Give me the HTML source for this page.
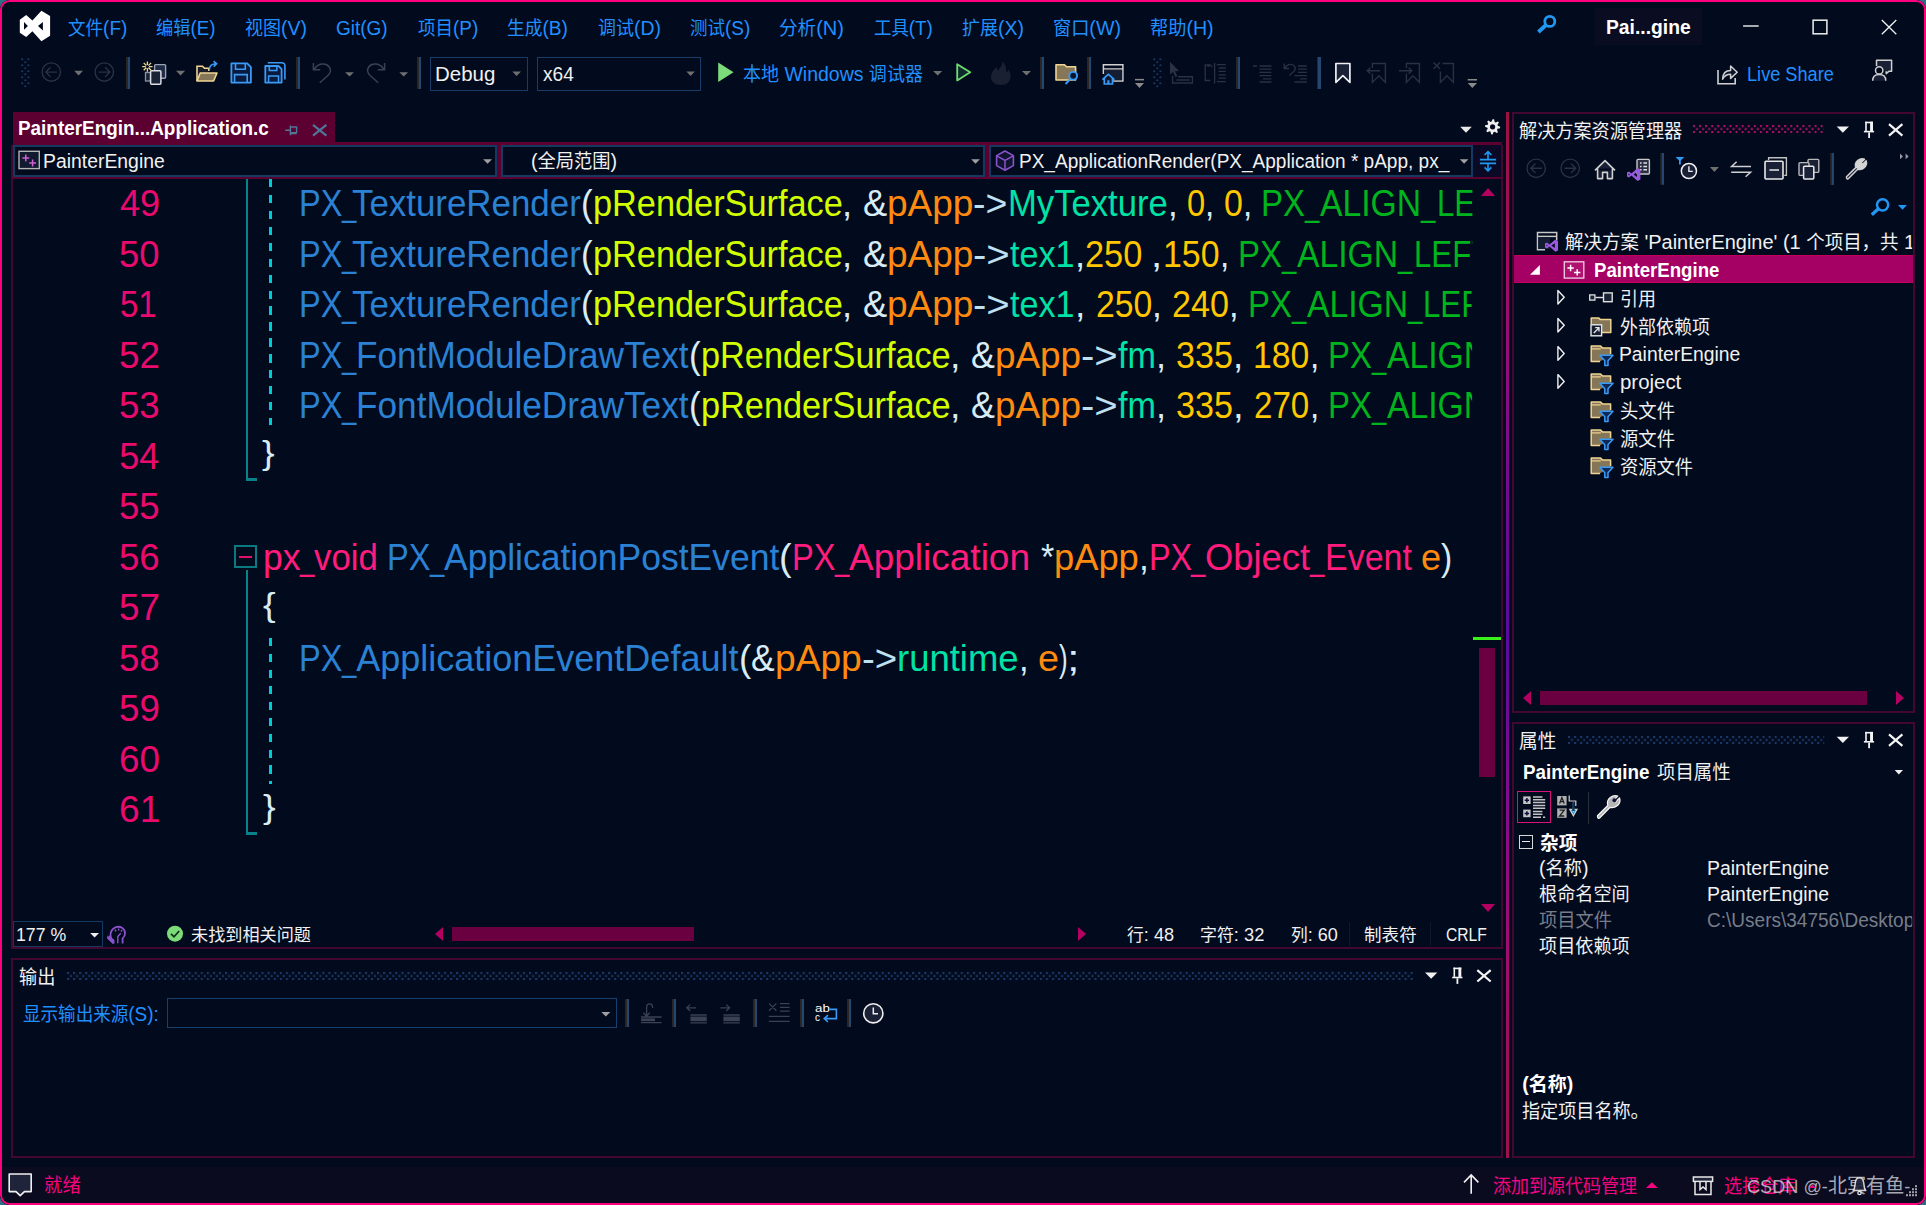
<!DOCTYPE html>
<html lang="zh"><head><meta charset="utf-8"><title>PainterEngine</title><style>
html,body{margin:0;padding:0}
body{width:1926px;height:1205px;overflow:hidden;background:#2f6f86;position:relative;font-family:"Liberation Sans","Noto Sans CJK SC",sans-serif;}
#win{position:absolute;left:0;top:0;width:1926px;height:1205px;background:#020a1e;border-radius:9.5px;overflow:hidden}
#frame{position:absolute;left:0;top:0;width:1926px;height:1205px;box-sizing:border-box;border:2.2px solid #ff007f;border-bottom-width:2.4px;border-radius:9.5px}
.a{position:absolute}
.t{position:absolute;white-space:pre;line-height:30px;height:30px;transform-origin:0 0}
.l{line-height:1px}
svg{position:absolute;overflow:visible}
</style></head><body><div id="win"><div class="a" style="left:1595.3px;top:8.1px;width:106.4px;height:37.4px;background:#0a0c21;"></div><div class="a" style="left:430.0px;top:56.7px;width:97.7px;height:34.0px;box-sizing:border-box;border:1.5px solid #1a3a68;"></div><div class="a" style="left:537.3px;top:56.7px;width:164.0px;height:34.0px;box-sizing:border-box;border:1.5px solid #1a3a68;"></div><div class="a" style="left:126.1px;top:57.0px;width:1.5px;height:32.0px;background:#2a2622;"></div><div class="a" style="left:127.6px;top:57.0px;width:2.4px;height:32.0px;background:#27466f;"></div><div class="a" style="left:296.1px;top:57.0px;width:1.5px;height:32.0px;background:#2a2622;"></div><div class="a" style="left:297.6px;top:57.0px;width:2.4px;height:32.0px;background:#27466f;"></div><div class="a" style="left:417.1px;top:57.0px;width:1.5px;height:32.0px;background:#2a2622;"></div><div class="a" style="left:418.6px;top:57.0px;width:2.4px;height:32.0px;background:#27466f;"></div><div class="a" style="left:1040.0px;top:57.0px;width:1.5px;height:32.0px;background:#2a2622;"></div><div class="a" style="left:1041.5px;top:57.0px;width:2.4px;height:32.0px;background:#27466f;"></div><div class="a" style="left:1087.1px;top:57.0px;width:1.5px;height:32.0px;background:#2a2622;"></div><div class="a" style="left:1088.6px;top:57.0px;width:2.4px;height:32.0px;background:#27466f;"></div><div class="a" style="left:1236.1px;top:57.0px;width:1.5px;height:32.0px;background:#2a2622;"></div><div class="a" style="left:1237.6px;top:57.0px;width:2.4px;height:32.0px;background:#27466f;"></div><div class="a" style="left:1316.9px;top:57.0px;width:1.5px;height:32.0px;background:#2a2622;"></div><div class="a" style="left:1318.4px;top:57.0px;width:2.4px;height:32.0px;background:#27466f;"></div><div class="a" style="left:13.0px;top:112.2px;width:321.9px;height:30.8px;background:#5c0032;"></div><div class="a" style="left:13.0px;top:142.0px;width:1489.0px;height:37.1px;background:#5c0032;"></div><div class="a" style="left:13.0px;top:145.0px;width:484.0px;height:32.0px;background:#020a1e;box-sizing:border-box;border:2px solid #143a60;"></div><div class="a" style="left:501.0px;top:145.0px;width:484.0px;height:32.0px;background:#020a1e;box-sizing:border-box;border:2px solid #143a60;"></div><div class="a" style="left:989.0px;top:145.0px;width:484.4px;height:32.0px;background:#020a1e;box-sizing:border-box;border:2px solid #143a60;"></div><div class="a" style="left:1473.4px;top:145.0px;width:27.4px;height:31.8px;background:#0a0a26;"></div><div class="a" style="left:11.0px;top:145.0px;width:2.0px;height:804.0px;background:#420830;"></div><div class="a" style="left:1501.0px;top:145.0px;width:2.0px;height:804.0px;background:#420830;"></div><div class="a" style="left:11.0px;top:947.0px;width:1492.0px;height:2.0px;background:#420830;"></div><div class="a" style="left:245.5px;top:179.0px;width:2.6px;height:301.5px;background:#0a8289;"></div><div class="a" style="left:245.5px;top:478.0px;width:11.2px;height:2.5px;background:#0a8289;"></div><div class="a" style="left:245.5px;top:570.0px;width:2.6px;height:264.5px;background:#0a8289;"></div><div class="a" style="left:245.5px;top:832.0px;width:11.2px;height:2.5px;background:#0a8289;"></div><div class="a" style="left:269.3px;top:178.8px;width:2.7px;height:246.7px;background:repeating-linear-gradient(180deg,#00ccd6 0,#00ccd6 8.3px,transparent 8.3px,transparent 15.93px);"></div><div class="a" style="left:269.3px;top:637.5px;width:2.7px;height:146.5px;background:repeating-linear-gradient(180deg,#00ccd6 0,#00ccd6 8.3px,transparent 8.3px,transparent 15.93px);"></div><div class="a" style="left:233.5px;top:544.5px;width:23.7px;height:23.8px;background:#020a1e;box-sizing:border-box;border:2.3px solid #0a7a80;"></div><div class="a" style="left:238.5px;top:555.5px;width:13.8px;height:2.8px;background:#e0106e;"></div><div class="a" style="left:1473.0px;top:636.8px;width:27.7px;height:3.0px;background:#3cf01a;"></div><div class="a" style="left:1479.0px;top:647.7px;width:16.0px;height:129.0px;background:#6a0040;"></div><svg style="left:1480.5px;top:187.5px" width="14" height="8"><path d="M0 8 L7 0 L14 8 Z" fill="#b4005f"/></svg><svg style="left:1480.5px;top:903.5px" width="14" height="8"><path d="M0 0 L7 8 L14 0 Z" fill="#b4005f"/></svg><div class="a" style="left:451.7px;top:927.3px;width:242.0px;height:13.7px;background:#6a0040;"></div><svg style="left:435px;top:927px" width="8" height="14"><path d="M8 0 L0 7 L8 14 Z" fill="#b4005f"/></svg><svg style="left:1078px;top:927px" width="8" height="14"><path d="M0 0 L8 7 L0 14 Z" fill="#b4005f"/></svg><div class="a" style="left:13.3px;top:921.0px;width:89.4px;height:25.7px;box-sizing:border-box;border:1.5px solid #143a60;"></div><div class="a" style="left:1349.0px;top:922.0px;width:1.0px;height:24.0px;background:#10182c;"></div><div class="a" style="left:1430.0px;top:922.0px;width:1.0px;height:24.0px;background:#10182c;"></div><div class="a" style="left:11.0px;top:958.0px;width:1492.0px;height:199.5px;box-sizing:border-box;border:2px solid #420830;"></div><div class="a" style="left:167.3px;top:998.3px;width:449.4px;height:30.0px;box-sizing:border-box;border:1.5px solid #16406e;"></div><div class="a" style="left:625.2px;top:999.0px;width:1.5px;height:28.0px;background:#2a2622;"></div><div class="a" style="left:626.7px;top:999.0px;width:2.3px;height:28.0px;background:#27466f;"></div><div class="a" style="left:672.2px;top:999.0px;width:1.5px;height:28.0px;background:#2a2622;"></div><div class="a" style="left:673.7px;top:999.0px;width:2.3px;height:28.0px;background:#27466f;"></div><div class="a" style="left:753.2px;top:999.0px;width:1.5px;height:28.0px;background:#2a2622;"></div><div class="a" style="left:754.7px;top:999.0px;width:2.3px;height:28.0px;background:#27466f;"></div><div class="a" style="left:800.2px;top:999.0px;width:1.5px;height:28.0px;background:#2a2622;"></div><div class="a" style="left:801.7px;top:999.0px;width:2.3px;height:28.0px;background:#27466f;"></div><div class="a" style="left:847.0px;top:999.0px;width:1.5px;height:28.0px;background:#2a2622;"></div><div class="a" style="left:848.5px;top:999.0px;width:2.3px;height:28.0px;background:#27466f;"></div><div class="a" style="left:1506.0px;top:112.0px;width:3.1px;height:1045.5px;background:linear-gradient(180deg,#9e1040 0,#a80a5c 138px,#9a0c7c 238px,#7c0a90 338px,#5a0aa0 523px,#860a92 688px,#a60a72 838px,#a0104a 1045px);"></div><div class="a" style="left:1512.0px;top:112.0px;width:403.0px;height:601.0px;box-sizing:border-box;border:2px solid #420830;"></div><div class="a" style="left:1514.0px;top:255.0px;width:399.0px;height:28.0px;background:#a50064;box-sizing:border-box;border-top:1px solid #c2005c;border-bottom:1px solid #c2005c;"></div><div class="a" style="left:1540.0px;top:691.0px;width:326.7px;height:14.0px;background:#6a0040;"></div><svg style="left:1523.3px;top:691px" width="8" height="14"><path d="M8 0 L0 7 L8 14 Z" fill="#b4005f"/></svg><svg style="left:1895.7px;top:691px" width="8" height="14"><path d="M0 0 L8 7 L0 14 Z" fill="#b4005f"/></svg><div class="a" style="left:1512.0px;top:722.0px;width:403.0px;height:435.5px;box-sizing:border-box;border:2px solid #420830;"></div><div class="a" style="left:1517.3px;top:791.0px;width:33.4px;height:32.3px;box-sizing:border-box;border:1.2px solid #d8107a;"></div><div class="a" style="left:1587.5px;top:792.0px;width:1.1px;height:32.0px;background:#2a2f3c;"></div><div class="a" style="left:1519.0px;top:834.5px;width:14.0px;height:14.0px;box-sizing:border-box;border:1.3px solid #d8d8d8;"></div><div class="a" style="left:1522.0px;top:840.8px;width:8.0px;height:1.4px;background:#e8e8e8;"></div><div class="a" style="left:0.0px;top:1166.8px;width:1926.0px;height:38.2px;background:#0a0b1f;"></div><svg style="left:1693.3px;top:125.4px" width="130.7" height="9"><defs><pattern id="d17058" width="6.08" height="6.1" patternUnits="userSpaceOnUse"><rect x="0" y="0" width="2" height="2" fill="#b8106a"/><rect x="3.04" y="3.05" width="2" height="2" fill="#b8106a"/></pattern></defs><rect width="130.7" height="8.1" fill="url(#d17058)"/></svg><svg style="left:1567.8px;top:736.1px" width="256.2" height="9"><defs><pattern id="d16414" width="6.08" height="6.1" patternUnits="userSpaceOnUse"><rect x="0" y="0" width="2" height="2" fill="#1e3c6a"/><rect x="3.04" y="3.05" width="2" height="2" fill="#1e3c6a"/></pattern></defs><rect width="256.2" height="8.1" fill="url(#d16414)"/></svg><svg style="left:66.9px;top:971.9px" width="1346.1" height="9"><defs><pattern id="d1640" width="6.08" height="6.1" patternUnits="userSpaceOnUse"><rect x="0" y="0" width="2" height="2" fill="#1e3c6a"/><rect x="3.04" y="3.05" width="2" height="2" fill="#1e3c6a"/></pattern></defs><rect width="1346.1" height="8.1" fill="url(#d1640)"/></svg><div class="t" style="left:67.6px;top:14px;font-size:19px;color:#2190ff;transform:scaleX(0.9230);">文件<span class="l" style="font-size:1.08em">(F)</span></div><div class="t" style="left:156.0px;top:14px;font-size:19px;color:#2190ff;transform:scaleX(0.9093);">编辑<span class="l" style="font-size:1.08em">(E)</span></div><div class="t" style="left:245.0px;top:14px;font-size:19px;color:#2190ff;transform:scaleX(0.9472);">视图<span class="l" style="font-size:1.08em">(V)</span></div><div class="t" style="left:336.3px;top:14px;font-size:19px;color:#2190ff;transform:scaleX(0.9227);"><span class="l" style="font-size:1.08em">Git(G)</span></div><div class="t" style="left:417.6px;top:14px;font-size:19px;color:#2190ff;transform:scaleX(0.9220);">项目<span class="l" style="font-size:1.08em">(P)</span></div><div class="t" style="left:507.0px;top:14px;font-size:19px;color:#2190ff;transform:scaleX(0.9314);">生成<span class="l" style="font-size:1.08em">(B)</span></div><div class="t" style="left:597.6px;top:14px;font-size:19px;color:#2190ff;transform:scaleX(0.9462);">调试<span class="l" style="font-size:1.08em">(D)</span></div><div class="t" style="left:689.6px;top:14px;font-size:19px;color:#2190ff;transform:scaleX(0.9220);">测试<span class="l" style="font-size:1.08em">(S)</span></div><div class="t" style="left:779.0px;top:14px;font-size:19px;color:#2190ff;transform:scaleX(0.9772);">分析<span class="l" style="font-size:1.08em">(N)</span></div><div class="t" style="left:873.6px;top:14px;font-size:19px;color:#2190ff;transform:scaleX(0.9166);">工具<span class="l" style="font-size:1.08em">(T)</span></div><div class="t" style="left:962.0px;top:14px;font-size:19px;color:#2190ff;transform:scaleX(0.9472);">扩展<span class="l" style="font-size:1.08em">(X)</span></div><div class="t" style="left:1053.0px;top:14px;font-size:19px;color:#2190ff;transform:scaleX(0.9563);">窗口<span class="l" style="font-size:1.08em">(W)</span></div><div class="t" style="left:1150.3px;top:14px;font-size:19px;color:#2190ff;transform:scaleX(0.9571);">帮助<span class="l" style="font-size:1.08em">(H)</span></div><div class="t" style="left:1606.0px;top:13px;font-size:19px;color:#ffffff;font-weight:700;transform:scaleX(0.9855);"><span class="l" style="font-size:1.03em">Pai...gine</span></div><div class="t" style="left:435.0px;top:60px;font-size:19px;color:#f1f1f1;transform:scaleX(0.9972);"><span class="l" style="font-size:1.08em">Debug</span></div><div class="t" style="left:543.1px;top:60px;font-size:19px;color:#f1f1f1;transform:scaleX(0.9303);"><span class="l" style="font-size:1.08em">x64</span></div><div class="t" style="left:743.2px;top:60px;font-size:19px;color:#2190ff;transform:scaleX(0.9488);">本地<span class="l" style="font-size:1.08em"> Windows </span>调试器</div><div class="t" style="left:1747.2px;top:60px;font-size:19px;color:#2190ff;transform:scaleX(0.8848);"><span class="l" style="font-size:1.08em">Live Share</span></div><div class="t" style="left:18.0px;top:114px;font-size:19px;color:#ffffff;font-weight:700;transform:scaleX(0.9655);"><span class="l" style="font-size:1.03em">PainterEngin...Application.c</span></div><div class="t" style="left:43.1px;top:147px;font-size:19px;color:#f1f1f1;transform:scaleX(0.9446);"><span class="l" style="font-size:1.08em">PainterEngine</span></div><div class="t" style="left:530.8px;top:147px;font-size:19px;color:#f1f1f1;transform:scaleX(0.9603);"><span class="l" style="font-size:1.08em">(</span>全局范围<span class="l" style="font-size:1.08em">)</span></div><div class="t" style="left:1019.2px;top:147px;font-size:19px;color:#f1f1f1;transform:scaleX(0.9269);"><span class="l" style="font-size:1.08em">PX_ApplicationRender(PX_Application * pApp, px_</span></div><div class="t" style="left:1519.3px;top:117px;font-size:19px;color:#f1f1f1;transform:scaleX(0.9540);">解决方案资源管理器</div><div class="t" style="left:1565.4px;top:228px;font-size:19px;color:#f1f1f1;transform:scaleX(0.9722);clip-path:inset(-20px 34.7px -20px -5px);">解决方案<span class="l" style="font-size:1.08em"> &#x27;PainterEngine&#x27; (1 </span>个项目，共<span class="l" style="font-size:1.08em"> 1 </span>个<span class="l" style="font-size:1.08em">)</span></div><div class="t" style="left:1593.6px;top:256px;font-size:19px;color:#ffffff;font-weight:700;transform:scaleX(0.9540);"><span class="l" style="font-size:1.03em">PainterEngine</span></div><div class="t" style="left:1620.0px;top:285px;font-size:19px;color:#f1f1f1;transform:scaleX(0.9453);">引用</div><div class="t" style="left:1620.0px;top:313px;font-size:19px;color:#f1f1f1;transform:scaleX(0.9487);">外部依赖项</div><div class="t" style="left:1619.3px;top:340px;font-size:19px;color:#f1f1f1;transform:scaleX(0.9407);"><span class="l" style="font-size:1.08em">PainterEngine</span></div><div class="t" style="left:1619.6px;top:368px;font-size:19px;color:#f1f1f1;transform:scaleX(0.9949);"><span class="l" style="font-size:1.08em">project</span></div><div class="t" style="left:1619.6px;top:397px;font-size:19px;color:#f1f1f1;transform:scaleX(0.9640);">头文件</div><div class="t" style="left:1619.6px;top:425px;font-size:19px;color:#f1f1f1;transform:scaleX(0.9640);">源文件</div><div class="t" style="left:1619.6px;top:453px;font-size:19px;color:#f1f1f1;transform:scaleX(0.9625);">资源文件</div><div class="t" style="left:1519.4px;top:727px;font-size:19px;color:#f1f1f1;transform:scaleX(0.9809);">属性</div><div class="t" style="left:1522.5px;top:758px;font-size:19px;color:#ffffff;font-weight:700;transform:scaleX(0.9618);"><span class="l" style="font-size:1.03em">PainterEngine</span></div><div class="t" style="left:1656.5px;top:758px;font-size:19px;color:#f1f1f1;transform:scaleX(0.9692);">项目属性</div><div class="t" style="left:1539.7px;top:829px;font-size:19px;color:#ffffff;font-weight:700;transform:scaleX(0.9809);">杂项</div><div class="t" style="left:1538.5px;top:854px;font-size:19px;color:#f1f1f1;transform:scaleX(0.9561);"><span class="l" style="font-size:1.08em">(</span>名称<span class="l" style="font-size:1.08em">)</span></div><div class="t" style="left:1706.7px;top:854px;font-size:19px;color:#f1f1f1;transform:scaleX(0.9478);"><span class="l" style="font-size:1.08em">PainterEngine</span></div><div class="t" style="left:1539.0px;top:880px;font-size:19px;color:#f1f1f1;transform:scaleX(0.9551);">根命名空间</div><div class="t" style="left:1706.7px;top:880px;font-size:19px;color:#f1f1f1;transform:scaleX(0.9478);"><span class="l" style="font-size:1.08em">PainterEngine</span></div><div class="t" style="left:1539.0px;top:906px;font-size:19px;color:#787d88;transform:scaleX(0.9611);">项目文件</div><div class="t" style="left:1707.3px;top:906px;font-size:19px;color:#787d88;transform:scaleX(0.9272);clip-path:inset(-20px 86.6px -20px -5px);"><span class="l" style="font-size:1.08em">C:\Users\34756\Desktop\PainterE</span></div><div class="t" style="left:1539.0px;top:932px;font-size:19px;color:#f1f1f1;transform:scaleX(0.9551);">项目依赖项</div><div class="t" style="left:1522.3px;top:1070px;font-size:19px;color:#ffffff;font-weight:700;"><span class="l" style="font-size:1.03em">(</span>名称<span class="l" style="font-size:1.03em">)</span></div><div class="t" style="left:1521.6px;top:1097px;font-size:19px;color:#f1f1f1;transform:scaleX(0.9538);">指定项目名称</div><div class="t" style="left:1630.4px;top:1097px;font-size:19px;color:#f1f1f1;">。</div><div class="t" style="left:16.3px;top:921px;font-size:17px;color:#f1f1f1;transform:scaleX(0.9638);"><span class="l" style="font-size:1.08em">177 %</span></div><div class="t" style="left:191.4px;top:921px;font-size:17px;color:#f1f1f1;transform:scaleX(1.0082);">未找到相关问题</div><div class="t" style="left:1127.3px;top:921px;font-size:17px;color:#f1f1f1;transform:scaleX(0.9903);">行<span class="l" style="font-size:1.08em">: 48</span></div><div class="t" style="left:1200.3px;top:921px;font-size:17px;color:#f1f1f1;transform:scaleX(0.9949);">字符<span class="l" style="font-size:1.08em">: 32</span></div><div class="t" style="left:1290.6px;top:921px;font-size:17px;color:#f1f1f1;transform:scaleX(0.9821);">列<span class="l" style="font-size:1.08em">: 60</span></div><div class="t" style="left:1364.3px;top:921px;font-size:17px;color:#f1f1f1;transform:scaleX(1.0334);">制表符</div><div class="t" style="left:1445.5px;top:921px;font-size:17px;color:#f1f1f1;transform:scaleX(0.8512);"><span class="l" style="font-size:1.08em">CRLF</span></div><div class="t" style="left:18.6px;top:963px;font-size:19px;color:#f1f1f1;transform:scaleX(0.9563);">输出</div><div class="t" style="left:22.6px;top:1000px;font-size:19px;color:#2190ff;transform:scaleX(0.9235);">显示输出来源<span class="l" style="font-size:1.08em">(S):</span></div><div class="t" style="left:43.7px;top:1171px;font-size:19px;color:#f5037f;transform:scaleX(0.9672);">就绪</div><div class="t" style="left:1493.3px;top:1172px;font-size:19px;color:#f5037f;transform:scaleX(0.9482);">添加到源代码管理</div><div class="t" style="left:1724.0px;top:1172px;font-size:19px;color:#f5037f;transform:scaleX(0.9517);">选择仓库</div><div class="t" style="left:1747.4px;top:1171px;font-size:20px;color:rgba(212,212,222,0.8);transform:scaleX(0.9548);"><span class="l" style="font-size:0.95em">CSDN @-</span>北冥有鱼<span class="l" style="font-size:0.95em">-</span></div><div class="t" style="left:814.7px;top:994px;font-size:10px;color:#ffffff;transform:scaleX(1.3326);">ab</div><div class="t" style="left:814.9px;top:1003px;font-size:10px;color:#ffffff;">c</div><div class="t" style="left:299.4px;top:189px;font-size:36px;color:#2b82d4;transform:scaleX(0.9035);">PX</div><div class="t" style="left:342.4px;top:189px;font-size:36px;color:#2b82d4;transform:scaleX(0.7150);">_</div><div class="t" style="left:352.3px;top:189px;font-size:36px;color:#2b82d4;transform:scaleX(0.9688);">TextureRender</div><div class="t" style="left:581.1px;top:189px;font-size:36px;color:#d8ecf6;transform:scaleX(0.9677);">(</div><div class="t" style="left:592.8px;top:189px;font-size:36px;color:#d2ff00;transform:scaleX(0.9528);">pRenderSurface</div><div class="t" style="left:842.4px;top:189px;font-size:36px;color:#d8ecf6;transform:scaleX(1.0126);">, </div><div class="t" style="left:862.7px;top:189px;font-size:36px;color:#d8ecf6;transform:scaleX(1.0096);">&amp;</div><div class="t" style="left:886.9px;top:189px;font-size:36px;color:#ff8a10;transform:scaleX(1.0279);">pApp</div><div class="t" style="left:973.3px;top:189px;font-size:36px;color:#bfe0f0;transform:scaleX(1.0403);">-&gt;</div><div class="t" style="left:1007.9px;top:189px;font-size:36px;color:#00e2a6;transform:scaleX(0.9619);">MyTexture</div><div class="t" style="left:1167.6px;top:189px;font-size:36px;color:#d8ecf6;transform:scaleX(0.9706);">, </div><div class="t" style="left:1187.0px;top:189px;font-size:36px;color:#ffc700;transform:scaleX(0.9072);">0</div><div class="t" style="left:1205.3px;top:189px;font-size:36px;color:#d8ecf6;transform:scaleX(0.9257);">, </div><div class="t" style="left:1223.7px;top:189px;font-size:36px;color:#ffc700;transform:scaleX(0.9421);">0</div><div class="t" style="left:1242.7px;top:189px;font-size:36px;color:#d8ecf6;transform:scaleX(0.9233);">, </div><div class="t" style="left:1261.2px;top:189px;font-size:36px;color:#00b41e;transform:scaleX(0.9139);">PX</div><div class="t" style="left:1304.7px;top:189px;font-size:36px;color:#00b41e;transform:scaleX(0.7150);">_</div><div class="t" style="left:1319.8px;top:189px;font-size:36px;color:#00b41e;transform:scaleX(0.9368);">ALIGN</div><div class="t" style="left:1420.9px;top:189px;font-size:36px;color:#00b41e;transform:scaleX(0.7150);">_</div><div class="t" style="left:1436.6px;top:189px;font-size:36px;color:#00b41e;transform:scaleX(0.8673);clip-path:inset(-20px 120.6px -20px -5px);">LEFTTOP</div><div class="t" style="left:299.4px;top:240px;font-size:36px;color:#2b82d4;transform:scaleX(0.9035);">PX</div><div class="t" style="left:342.4px;top:240px;font-size:36px;color:#2b82d4;transform:scaleX(0.7150);">_</div><div class="t" style="left:352.3px;top:240px;font-size:36px;color:#2b82d4;transform:scaleX(0.9688);">TextureRender</div><div class="t" style="left:581.1px;top:240px;font-size:36px;color:#d8ecf6;transform:scaleX(0.9677);">(</div><div class="t" style="left:592.8px;top:240px;font-size:36px;color:#d2ff00;transform:scaleX(0.9528);">pRenderSurface</div><div class="t" style="left:842.4px;top:240px;font-size:36px;color:#d8ecf6;transform:scaleX(1.0126);">, </div><div class="t" style="left:862.7px;top:240px;font-size:36px;color:#d8ecf6;transform:scaleX(1.0096);">&amp;</div><div class="t" style="left:886.9px;top:240px;font-size:36px;color:#ff8a10;transform:scaleX(1.0279);">pApp</div><div class="t" style="left:973.2px;top:240px;font-size:36px;color:#bfe0f0;transform:scaleX(1.1133);">-&gt;</div><div class="t" style="left:1010.2px;top:240px;font-size:36px;color:#00e2a6;transform:scaleX(0.9495);">tex1</div><div class="t" style="left:1074.7px;top:240px;font-size:36px;color:#d8ecf6;transform:scaleX(1.0108);">,</div><div class="t" style="left:1085.0px;top:240px;font-size:36px;color:#ffc700;transform:scaleX(0.9543);">250 </div><div class="t" style="left:1151.4px;top:240px;font-size:36px;color:#d8ecf6;transform:scaleX(1.1175);">,</div><div class="t" style="left:1163.1px;top:240px;font-size:36px;color:#ffc700;transform:scaleX(0.9406);">150</div><div class="t" style="left:1219.7px;top:240px;font-size:36px;color:#d8ecf6;transform:scaleX(0.9283);">, </div><div class="t" style="left:1238.3px;top:240px;font-size:36px;color:#00b41e;transform:scaleX(0.9139);">PX</div><div class="t" style="left:1281.8px;top:240px;font-size:36px;color:#00b41e;transform:scaleX(0.7150);">_</div><div class="t" style="left:1296.9px;top:240px;font-size:36px;color:#00b41e;transform:scaleX(0.9368);">ALIGN</div><div class="t" style="left:1398.0px;top:240px;font-size:36px;color:#00b41e;transform:scaleX(0.7150);">_</div><div class="t" style="left:1413.7px;top:240px;font-size:36px;color:#00b41e;transform:scaleX(0.8673);clip-path:inset(-20px 94.2px -20px -5px);">LEFTTOP</div><div class="t" style="left:299.4px;top:290px;font-size:36px;color:#2b82d4;transform:scaleX(0.9035);">PX</div><div class="t" style="left:342.4px;top:290px;font-size:36px;color:#2b82d4;transform:scaleX(0.7150);">_</div><div class="t" style="left:352.3px;top:290px;font-size:36px;color:#2b82d4;transform:scaleX(0.9688);">TextureRender</div><div class="t" style="left:581.1px;top:290px;font-size:36px;color:#d8ecf6;transform:scaleX(0.9677);">(</div><div class="t" style="left:592.8px;top:290px;font-size:36px;color:#d2ff00;transform:scaleX(0.9528);">pRenderSurface</div><div class="t" style="left:842.4px;top:290px;font-size:36px;color:#d8ecf6;transform:scaleX(1.0126);">, </div><div class="t" style="left:862.7px;top:290px;font-size:36px;color:#d8ecf6;transform:scaleX(1.0096);">&amp;</div><div class="t" style="left:886.9px;top:290px;font-size:36px;color:#ff8a10;transform:scaleX(1.0279);">pApp</div><div class="t" style="left:973.2px;top:290px;font-size:36px;color:#bfe0f0;transform:scaleX(1.1133);">-&gt;</div><div class="t" style="left:1010.2px;top:290px;font-size:36px;color:#00e2a6;transform:scaleX(0.9495);">tex1</div><div class="t" style="left:1074.7px;top:290px;font-size:36px;color:#d8ecf6;transform:scaleX(1.0354);">, </div><div class="t" style="left:1095.6px;top:290px;font-size:36px;color:#ffc700;transform:scaleX(0.9367);">250</div><div class="t" style="left:1151.8px;top:290px;font-size:36px;color:#d8ecf6;transform:scaleX(0.9854);">, </div><div class="t" style="left:1171.6px;top:290px;font-size:36px;color:#ffc700;transform:scaleX(0.9484);">240</div><div class="t" style="left:1228.6px;top:290px;font-size:36px;color:#d8ecf6;transform:scaleX(0.9633);">, </div><div class="t" style="left:1248.0px;top:290px;font-size:36px;color:#00b41e;transform:scaleX(0.9139);">PX</div><div class="t" style="left:1291.5px;top:290px;font-size:36px;color:#00b41e;transform:scaleX(0.7150);">_</div><div class="t" style="left:1306.6px;top:290px;font-size:36px;color:#00b41e;transform:scaleX(0.9368);">ALIGN</div><div class="t" style="left:1407.7px;top:290px;font-size:36px;color:#00b41e;transform:scaleX(0.7150);">_</div><div class="t" style="left:1423.4px;top:290px;font-size:36px;color:#00b41e;transform:scaleX(0.8673);clip-path:inset(-20px 105.4px -20px -5px);">LEFTTOP</div><div class="t" style="left:299.4px;top:341px;font-size:36px;color:#2b82d4;transform:scaleX(0.9035);">PX</div><div class="t" style="left:342.4px;top:341px;font-size:36px;color:#2b82d4;transform:scaleX(0.7150);">_</div><div class="t" style="left:356.3px;top:341px;font-size:36px;color:#2b82d4;transform:scaleX(0.9776);">FontModuleDrawText</div><div class="t" style="left:688.8px;top:341px;font-size:36px;color:#d8ecf6;transform:scaleX(0.9677);">(</div><div class="t" style="left:700.5px;top:341px;font-size:36px;color:#d2ff00;transform:scaleX(0.9524);">pRenderSurface</div><div class="t" style="left:949.9px;top:341px;font-size:36px;color:#d8ecf6;transform:scaleX(1.0476);">, </div><div class="t" style="left:971.0px;top:341px;font-size:36px;color:#d8ecf6;transform:scaleX(0.9971);">&amp;</div><div class="t" style="left:994.9px;top:341px;font-size:36px;color:#ff8a10;transform:scaleX(1.0243);">pApp</div><div class="t" style="left:1080.9px;top:341px;font-size:36px;color:#bfe0f0;transform:scaleX(1.1113);">-&gt;</div><div class="t" style="left:1117.8px;top:341px;font-size:36px;color:#00e2a6;transform:scaleX(0.9494);">fm</div><div class="t" style="left:1155.7px;top:341px;font-size:36px;color:#d8ecf6;transform:scaleX(1.0074);">, </div><div class="t" style="left:1176.0px;top:341px;font-size:36px;color:#ffc700;transform:scaleX(0.9460);">335</div><div class="t" style="left:1232.7px;top:341px;font-size:36px;color:#d8ecf6;transform:scaleX(1.0238);">, </div><div class="t" style="left:1253.4px;top:341px;font-size:36px;color:#ffc700;transform:scaleX(0.9356);">180</div><div class="t" style="left:1309.7px;top:341px;font-size:36px;color:#d8ecf6;transform:scaleX(0.9283);">, </div><div class="t" style="left:1328.3px;top:341px;font-size:36px;color:#00b41e;transform:scaleX(0.9139);">PX</div><div class="t" style="left:1371.8px;top:341px;font-size:36px;color:#00b41e;transform:scaleX(0.7150);">_</div><div class="t" style="left:1386.9px;top:341px;font-size:36px;color:#00b41e;transform:scaleX(0.9368);clip-path:inset(-20px 17.2px -20px -5px);">ALIGN</div><div class="t" style="left:299.4px;top:391px;font-size:36px;color:#2b82d4;transform:scaleX(0.9035);">PX</div><div class="t" style="left:342.4px;top:391px;font-size:36px;color:#2b82d4;transform:scaleX(0.7150);">_</div><div class="t" style="left:356.3px;top:391px;font-size:36px;color:#2b82d4;transform:scaleX(0.9776);">FontModuleDrawText</div><div class="t" style="left:688.8px;top:391px;font-size:36px;color:#d8ecf6;transform:scaleX(0.9677);">(</div><div class="t" style="left:700.5px;top:391px;font-size:36px;color:#d2ff00;transform:scaleX(0.9524);">pRenderSurface</div><div class="t" style="left:949.9px;top:391px;font-size:36px;color:#d8ecf6;transform:scaleX(1.0476);">, </div><div class="t" style="left:971.0px;top:391px;font-size:36px;color:#d8ecf6;transform:scaleX(0.9971);">&amp;</div><div class="t" style="left:994.9px;top:391px;font-size:36px;color:#ff8a10;transform:scaleX(1.0243);">pApp</div><div class="t" style="left:1080.9px;top:391px;font-size:36px;color:#bfe0f0;transform:scaleX(1.1113);">-&gt;</div><div class="t" style="left:1117.8px;top:391px;font-size:36px;color:#00e2a6;transform:scaleX(0.9494);">fm</div><div class="t" style="left:1155.7px;top:391px;font-size:36px;color:#d8ecf6;transform:scaleX(1.0074);">, </div><div class="t" style="left:1176.0px;top:391px;font-size:36px;color:#ffc700;transform:scaleX(0.9460);">335</div><div class="t" style="left:1232.5px;top:391px;font-size:36px;color:#d8ecf6;transform:scaleX(1.0704);">, </div><div class="t" style="left:1254.3px;top:391px;font-size:36px;color:#ffc700;transform:scaleX(0.9201);">270</div><div class="t" style="left:1309.7px;top:391px;font-size:36px;color:#d8ecf6;transform:scaleX(0.9283);">, </div><div class="t" style="left:1328.3px;top:391px;font-size:36px;color:#00b41e;transform:scaleX(0.9139);">PX</div><div class="t" style="left:1371.8px;top:391px;font-size:36px;color:#00b41e;transform:scaleX(0.7150);">_</div><div class="t" style="left:1386.9px;top:391px;font-size:36px;color:#00b41e;transform:scaleX(0.9368);clip-path:inset(-20px 17.2px -20px -5px);">ALIGN</div><div class="t" style="left:262.1px;top:437px;font-size:34px;color:#d8ecf6;transform:scaleX(1.1099);">}</div><div class="t" style="left:262.7px;top:543px;font-size:36px;color:#ff1c7c;transform:scaleX(0.9877);">px</div><div class="t" style="left:300.1px;top:543px;font-size:36px;color:#ff1c7c;transform:scaleX(0.7150);">_</div><div class="t" style="left:313.6px;top:543px;font-size:36px;color:#ff1c7c;transform:scaleX(0.9661);">void </div><div class="t" style="left:387.3px;top:543px;font-size:36px;color:#2b82d4;transform:scaleX(0.9035);">PX</div><div class="t" style="left:430.3px;top:543px;font-size:36px;color:#2b82d4;transform:scaleX(0.7150);">_</div><div class="t" style="left:444.1px;top:543px;font-size:36px;color:#2b82d4;transform:scaleX(0.9857);">ApplicationPostEvent</div><div class="t" style="left:779.4px;top:543px;font-size:36px;color:#d8ecf6;transform:scaleX(1.0483);">(</div><div class="t" style="left:792.3px;top:543px;font-size:36px;color:#ff1c7c;transform:scaleX(0.9035);">PX</div><div class="t" style="left:835.3px;top:543px;font-size:36px;color:#ff1c7c;transform:scaleX(0.7150);">_</div><div class="t" style="left:849.1px;top:543px;font-size:36px;color:#ff1c7c;transform:scaleX(1.0278);">Application </div><div class="t" style="left:1040.5px;top:543px;font-size:36px;color:#d8ecf6;transform:scaleX(0.9461);">*</div><div class="t" style="left:1053.7px;top:543px;font-size:36px;color:#ff8a10;transform:scaleX(1.0084);">pApp</div><div class="t" style="left:1138.5px;top:543px;font-size:36px;color:#d8ecf6;transform:scaleX(0.9866);">,</div><div class="t" style="left:1148.7px;top:543px;font-size:36px;color:#ff1c7c;transform:scaleX(0.8952);">PX</div><div class="t" style="left:1191.2px;top:543px;font-size:36px;color:#ff1c7c;transform:scaleX(0.7150);">_</div><div class="t" style="left:1204.6px;top:543px;font-size:36px;color:#ff1c7c;transform:scaleX(1.0106);">Object</div><div class="t" style="left:1309.6px;top:543px;font-size:36px;color:#ff1c7c;transform:scaleX(0.7150);">_</div><div class="t" style="left:1324.7px;top:543px;font-size:36px;color:#ff1c7c;transform:scaleX(0.9448);">Event </div><div class="t" style="left:1421.0px;top:543px;font-size:36px;color:#ff8a10;transform:scaleX(1.0043);">e</div><div class="t" style="left:1441.1px;top:543px;font-size:36px;color:#d8ecf6;transform:scaleX(0.9342);">)</div><div class="t" style="left:262.7px;top:589px;font-size:34px;color:#d8ecf6;transform:scaleX(1.1081);">{</div><div class="t" style="left:299.4px;top:644px;font-size:36px;color:#2b82d4;transform:scaleX(0.9035);">PX</div><div class="t" style="left:342.4px;top:644px;font-size:36px;color:#2b82d4;transform:scaleX(0.7150);">_</div><div class="t" style="left:356.2px;top:644px;font-size:36px;color:#2b82d4;">ApplicationEventDefault</div><div class="t" style="left:739.1px;top:644px;font-size:36px;color:#d8ecf6;transform:scaleX(1.0139);">(</div><div class="t" style="left:751.4px;top:644px;font-size:36px;color:#d8ecf6;transform:scaleX(0.9846);">&amp;</div><div class="t" style="left:774.9px;top:644px;font-size:36px;color:#ff8a10;transform:scaleX(1.0314);">pApp</div><div class="t" style="left:861.6px;top:644px;font-size:36px;color:#bfe0f0;transform:scaleX(1.0664);">-&gt;</div><div class="t" style="left:896.9px;top:644px;font-size:36px;color:#00e2a6;transform:scaleX(1.0126);">runtime</div><div class="t" style="left:1018.6px;top:644px;font-size:36px;color:#d8ecf6;transform:scaleX(0.9645);">, </div><div class="t" style="left:1037.7px;top:644px;font-size:36px;color:#ff8a10;transform:scaleX(1.0493);">e</div><div class="t" style="left:1058.8px;top:644px;font-size:36px;color:#d8ecf6;transform:scaleX(0.7230);">)</div><div class="t" style="left:1066.7px;top:644px;font-size:36px;color:#d8ecf6;transform:scaleX(1.2515);">;</div><div class="t" style="left:262.7px;top:791px;font-size:34px;color:#d8ecf6;transform:scaleX(1.1099);">}</div><div class="t" style="left:119.9px;top:189px;font-size:36px;color:#ea0a6e;transform:scaleX(1.0022);">49</div><div class="t" style="left:119.2px;top:240px;font-size:36px;color:#ea0a6e;transform:scaleX(1.0108);">50</div><div class="t" style="left:120.4px;top:290px;font-size:36px;color:#ea0a6e;transform:scaleX(0.9173);">51</div><div class="t" style="left:119.2px;top:341px;font-size:36px;color:#ea0a6e;transform:scaleX(1.0219);">52</div><div class="t" style="left:119.2px;top:391px;font-size:36px;color:#ea0a6e;transform:scaleX(1.0156);">53</div><div class="t" style="left:119.3px;top:442px;font-size:36px;color:#ea0a6e;">54</div><div class="t" style="left:119.2px;top:492px;font-size:36px;color:#ea0a6e;transform:scaleX(1.0136);">55</div><div class="t" style="left:119.2px;top:543px;font-size:36px;color:#ea0a6e;transform:scaleX(1.0156);">56</div><div class="t" style="left:119.2px;top:593px;font-size:36px;color:#ea0a6e;transform:scaleX(1.0219);">57</div><div class="t" style="left:119.2px;top:644px;font-size:36px;color:#ea0a6e;transform:scaleX(1.0151);">58</div><div class="t" style="left:119.2px;top:694px;font-size:36px;color:#ea0a6e;transform:scaleX(1.0190);">59</div><div class="t" style="left:118.8px;top:745px;font-size:36px;color:#ea0a6e;transform:scaleX(1.0214);">60</div><div class="t" style="left:118.8px;top:795px;font-size:36px;color:#ea0a6e;transform:scaleX(1.0312);">61</div><svg style="left:0;top:0" width="1926" height="1205" viewBox="0 0 1926 1205"><path d="M41.4 10.8 L50.1 16 L50.1 35.8 L41.4 41.2 L32.4 31.3 L26.2 37.1 L19.8 32.8 L19.8 19.75 L26.2 15.1 L32.4 20.5 Z M24 22 L27.9 25.9 L24 29.8 Z M42.9 22 L38 25.9 L42.9 30.4 Z" fill="#ffffff" fill-rule="evenodd"/><circle cx="1549.8" cy="21.4" r="5.0" fill="none" stroke="#2196f3" stroke-width="2.8"/><path d="M1545.8 25.2 L1538.4 32" fill="none" stroke="#2196f3" stroke-width="3.9" /><path d="M1743.1 26 H1758.7" fill="none" stroke="#f0f0f0" stroke-width="1.4" /><rect x="1813.1" y="20.2" width="13.8" height="13.6" fill="none" stroke="#f0f0f0" stroke-width="1.5"/><path d="M1881.8 20 L1896.3 34.3 M1896.3 20 L1881.8 34.3" fill="none" stroke="#f0f0f0" stroke-width="1.3" /><rect x="21.2" y="58.5" width="2.0" height="1.6" fill="#1c3a66"/><rect x="27.4" y="58.5" width="2.0" height="1.6" fill="#1c3a66"/><rect x="24.3" y="61.5" width="2.0" height="1.6" fill="#1c3a66"/><rect x="21.2" y="64.5" width="2.0" height="1.6" fill="#1c3a66"/><rect x="27.4" y="64.5" width="2.0" height="1.6" fill="#1c3a66"/><rect x="24.3" y="67.5" width="2.0" height="1.6" fill="#1c3a66"/><rect x="21.2" y="70.5" width="2.0" height="1.6" fill="#1c3a66"/><rect x="27.4" y="70.5" width="2.0" height="1.6" fill="#1c3a66"/><rect x="24.3" y="73.5" width="2.0" height="1.6" fill="#1c3a66"/><rect x="21.2" y="76.5" width="2.0" height="1.6" fill="#1c3a66"/><rect x="27.4" y="76.5" width="2.0" height="1.6" fill="#1c3a66"/><rect x="24.3" y="79.5" width="2.0" height="1.6" fill="#1c3a66"/><rect x="21.2" y="82.5" width="2.0" height="1.6" fill="#1c3a66"/><rect x="27.4" y="82.5" width="2.0" height="1.6" fill="#1c3a66"/><rect x="24.3" y="85.5" width="2.0" height="1.6" fill="#1c3a66"/><circle cx="51.3" cy="72.1" r="9.2" fill="none" stroke="#2a3142" stroke-width="1.4"/><path d="M57 72.1 H46 M50.5 67.3 L45.8 72.1 L50.5 76.9" fill="none" stroke="#2a3142" stroke-width="1.4" /><path d="M74.2 70.8 L83.0 70.8 L78.6 75.4 Z" fill="#6f6f6f" /><circle cx="104.3" cy="72.1" r="9.2" fill="none" stroke="#2a3142" stroke-width="1.4"/><path d="M98.6 72.1 H109.6 M105.1 67.3 L109.8 72.1 L105.1 76.9" fill="none" stroke="#2a3142" stroke-width="1.4" /><rect x="145.5" y="72.5" width="5.0" height="8.5" fill="#1a2238" stroke="#8a92a6" stroke-width="1.3"/><rect x="154.6" y="64.6" width="11.0" height="13.6" fill="#1f2a44" stroke="#9aa2b6" stroke-width="1.4" rx="1"/><rect x="150.6" y="70.8" width="10.3" height="13.5" fill="#1a2238" stroke="#dcdce4" stroke-width="1.5" rx="1"/><path d="M147.4 61.4 V71.8 M142.2 66.6 H152.6 M143.7 62.9 L151.1 70.3 M151.1 62.9 L143.7 70.3" fill="none" stroke="#f0d88a" stroke-width="1.3" /><circle cx="147.4" cy="66.6" r="1.6" fill="#020a1e"/><path d="M176.0 70.8 L185.1 70.8 L180.6 75.4 Z" fill="#6f6f6f" /><path d="M197 81 V66.2 H202.5 L204.5 68.2 H208.8 V71" fill="#1a1c28" stroke="#f0d492" stroke-width="1.6" /><path d="M197 81 L200.2 73 H217 L213.6 81 Z" fill="#857658" stroke="#f0d492" stroke-width="1.6" stroke-linejoin="round"/><path d="M209.5 69.5 C209.5 65.5 212 63.8 216.3 63.8 M213.6 61.2 L216.6 63.8 L213.6 66.6" fill="none" stroke="#3a9af5" stroke-width="1.6" /><path d="M231.4 63.4 H247.2 L250.9 67.1 V82.6 H231.4 Z" fill="#0a1a3c" stroke="#3a9af5" stroke-width="1.8" stroke-linejoin="round"/><path d="M235.5 63.4 V69.3 H245.3 V63.4 M234.6 82.6 V74.6 H247.2 V82.6" fill="none" stroke="#3a9af5" stroke-width="1.6" /><path d="M267.8 62.8 H281.5 C283.6 62.8 284.9 64 284.9 66 V79.6" fill="none" stroke="#3a9af5" stroke-width="1.6" /><path d="M265.3 66 H278.5 L281.6 69.1 V82.6 H265.3 Z" fill="#0a1a3c" stroke="#3a9af5" stroke-width="1.8" stroke-linejoin="round"/><path d="M269.3 66 V70.6 H276.8 V66 M268.6 82.6 V76 H278.5 V82.6" fill="none" stroke="#3a9af5" stroke-width="1.5" /><path d="M313.4 63 V69.7 H320.3 M314.3 69.3 C318 63 326 62.5 329.3 67 C331.5 70.2 330 73.6 327.6 75.8 L319.8 82.8" fill="none" stroke="#3a4152" stroke-width="1.5" /><path d="M345.1 72.2 L353.9 72.2 L349.5 76.6 Z" fill="#6f6f6f" /><path d="M384.6 63 V69.7 H377.7 M383.7 69.3 C380 63 372 62.5 368.7 67 C366.5 70.2 368 73.6 370.4 75.8 L378.2 82.8" fill="none" stroke="#3a4152" stroke-width="1.5" /><path d="M399.3 72.2 L408.1 72.2 L403.7 76.6 Z" fill="#6f6f6f" /><path d="M512.3 71.5 L521.0 71.5 L516.6 76.0 Z" fill="#6f6f6f" /><path d="M686.3 71.5 L694.9 71.5 L690.6 76.0 Z" fill="#6f6f6f" /><path d="M718.2 62.6 L733.5 72.3 L718.2 82 Z" fill="#7ddc7a" /><path d="M933.1 70.9 L942.2 70.9 L937.7 75.6 Z" fill="#6f6f6f" /><path d="M957.2 64.2 L970.2 72.3 L957.2 80.4 Z" fill="#0f2a2c" stroke="#6fdc6f" stroke-width="1.8" stroke-linejoin="round"/><path d="M1002 61.5 C1003 66 999.5 67.5 998.3 70.5 C996.5 68.5 996.8 66.8 996.8 66.8 C993 70 991 73.5 991 77.2 C991 81.8 995 84.9 1000.8 84.9 C1006.8 84.9 1010.6 81.4 1010.6 76.4 C1010.6 73.4 1009.5 71.2 1008.2 69.6 C1007.8 71.3 1007 72.2 1006 72.8 C1006.6 68 1005.6 64 1002 61.5 Z" fill="#182032" /><path d="M1022.0 70.9 L1031.0 70.9 L1026.5 75.6 Z" fill="#6f6f6f" /><path d="M1056 80 V64.8 H1064.5 L1066.5 66.8 H1075.6 V80 Z" fill="#857658" stroke="#f0d492" stroke-width="1.6" stroke-linejoin="round"/><circle cx="1073.2" cy="75.8" r="3.9" fill="#0a1630" stroke="#3a9af5" stroke-width="1.9"/><path d="M1070.4 78.8 L1065.6 84" fill="none" stroke="#3a9af5" stroke-width="1.9" /><path d="M1110 81 H1122.9 V64.8 H1103.4 V74" fill="none" stroke="#d0d0d0" stroke-width="1.5" /><path d="M1103.4 69 H1122.9" fill="none" stroke="#d0d0d0" stroke-width="1.5" /><rect x="1104.2" y="69.7" width="17.9" height="10.5" fill="#151d33"/><path d="M1102.4 79.6 L1108.4 74.4 L1114.4 79.6 M1104.3 78.6 V84 H1112.5 V78.6" fill="#0a1630" stroke="#3a9af5" stroke-width="1.7" /><rect x="1107.3" y="80.3" width="2.2" height="3.7" fill="#3a9af5"/><rect x="1135.0" y="78.9" width="9.0" height="1.5" fill="#8a8a8a"/><path d="M1135.0 83.0 L1144.0 83.0 L1139.5 88.0 Z" fill="#8a8a8a" /><rect x="1153.2" y="58.5" width="2.0" height="1.6" fill="#1c3a66"/><rect x="1159.4" y="58.5" width="2.0" height="1.6" fill="#1c3a66"/><rect x="1156.3" y="61.5" width="2.0" height="1.6" fill="#1c3a66"/><rect x="1153.2" y="64.5" width="2.0" height="1.6" fill="#1c3a66"/><rect x="1159.4" y="64.5" width="2.0" height="1.6" fill="#1c3a66"/><rect x="1156.3" y="67.5" width="2.0" height="1.6" fill="#1c3a66"/><rect x="1153.2" y="70.5" width="2.0" height="1.6" fill="#1c3a66"/><rect x="1159.4" y="70.5" width="2.0" height="1.6" fill="#1c3a66"/><rect x="1156.3" y="73.5" width="2.0" height="1.6" fill="#1c3a66"/><rect x="1153.2" y="76.5" width="2.0" height="1.6" fill="#1c3a66"/><rect x="1159.4" y="76.5" width="2.0" height="1.6" fill="#1c3a66"/><rect x="1156.3" y="79.5" width="2.0" height="1.6" fill="#1c3a66"/><rect x="1153.2" y="82.5" width="2.0" height="1.6" fill="#1c3a66"/><rect x="1159.4" y="82.5" width="2.0" height="1.6" fill="#1c3a66"/><rect x="1156.3" y="85.5" width="2.0" height="1.6" fill="#1c3a66"/><path d="M1170 61.7 L1170 74.5 L1173 72 L1175.4 77 L1177.4 76 L1175 71.2 L1179 71 Z" fill="#2a3142" /><path d="M1172.6 76 V83 H1192.4 V76.8 H1177.8 M1176.4 80 H1189.6" fill="none" stroke="#2a3142" stroke-width="1.4" /><path d="M1210 64.6 L1212.3 67 M1210 64.6 L1207.7 67 M1210 65 H1205.2 V80.5 H1210.3 M1214.6 63 V83.4 M1216.8 64.6 H1225.8 M1218.6 68 H1225.8 M1218.6 71.4 H1225.8 M1218.6 74.8 H1225.8 M1218.6 78.2 H1225.8 M1216.8 81.6 H1225.8" fill="none" stroke="#2a3142" stroke-width="1.3" /><path d="M1253 66 H1257 M1259.5 66 H1271.4 M1259.5 69.2 H1271.4 M1259.5 72.4 H1271.4 M1259.5 75.6 H1271.4 M1263 78.8 H1271.4 M1259.5 82 H1271.4" fill="none" stroke="#2a3142" stroke-width="1.3" /><path d="M1284.2 63.5 V68.5 H1289 M1285 68 C1287 63.6 1293 63.4 1294.8 66.6 C1296 69 1294.6 71 1292.6 72.6 L1289.4 75.4 M1298 66 H1306.8 M1298 69.2 H1306.8 M1298 72.4 H1306.8 M1294.5 75.6 H1306.8 M1300 78.8 H1306.8 M1294.5 82 H1306.8" fill="none" stroke="#2a3142" stroke-width="1.3" /><path d="M1335.9 63.5 H1349.9 V82.4 L1342.9 75.6 L1335.9 82.4 Z" fill="#1a2136" stroke="#f0f0f0" stroke-width="1.7" stroke-linejoin="round"/><path d="M1372.4 68 V63.5 H1385.4 V82.4 L1378.9 75.8 L1372.4 82.4 V73.4 M1380 70.7 H1367.4 M1370.4 67.7 L1367.2 70.7 L1370.4 73.7" fill="none" stroke="#2a3142" stroke-width="1.4" /><path d="M1406.4 68 V63.5 H1419.4 V82.4 L1412.9 75.8 L1406.4 82.4 V73.4 M1399 70.7 H1411.6 M1408.6 67.7 L1411.8 70.7 L1408.6 73.7" fill="none" stroke="#2a3142" stroke-width="1.4" /><path d="M1442.5 63.5 H1453.4 V82.4 L1446.9 75.8 L1440.4 82.4 V71.5 M1433.6 62.4 L1440 68.8 M1440 62.4 L1433.6 68.8" fill="none" stroke="#2a3142" stroke-width="1.4" /><rect x="1467.7" y="79.0" width="9.3" height="1.5" fill="#8a8a8a"/><path d="M1467.7 83.0 L1477.0 83.0 L1472.3 88.0 Z" fill="#8a8a8a" /><path d="M1718 70 V83.8 H1735.2 V78" fill="none" stroke="#d0d0d0" stroke-width="1.6" /><path d="M1722.6 79.2 C1722.8 73.4 1726 70.6 1730.6 70.6 V66 L1737.2 72.2 L1730.6 78.4 V74.2 C1727 74.2 1724.4 75.6 1722.6 79.2 Z" fill="#0a1226" stroke="#d0d0d0" stroke-width="1.5" stroke-linejoin="round"/><path d="M1876.5 66 V60.3 H1891.6 V71.2 H1889 L1886.2 73.6 V71.2" fill="#1a2136" stroke="#d0d0d0" stroke-width="1.5" stroke-linejoin="round"/><circle cx="1879.2" cy="70.4" r="3.7" fill="#020a1e" stroke="#d0d0d0" stroke-width="1.5"/><path d="M1872.7 80.8 C1872.7 76.6 1875.4 74.6 1879.2 74.6 C1883 74.6 1885.8 76.6 1885.8 80.8" fill="#1a2136" stroke="#d0d0d0" stroke-width="1.5" /><path d="M285.2 130.2 H290.4 M290.4 125.6 V135.2 M290.4 127 H296.6 V132.6 H290.4 M290.4 133.6 H296.6" fill="none" stroke="#4f7797" stroke-width="1.4" /><path d="M313 124.8 L326.4 135.6 M326.4 124.8 L313 135.6" fill="none" stroke="#4f7797" stroke-width="2.2" /><rect x="19.0" y="151.3" width="20.3" height="17.3" fill="#121a30" stroke="#b4b4b4" stroke-width="1.4"/><path d="M25.8 154.6 V161.4 M22.4 158 H29.2 M32.6 159.6 V166.4 M29.2 163 H36" fill="none" stroke="#d060d4" stroke-width="1.5" /><path d="M483.1 159.2 L492.0 159.2 L487.6 163.8 Z" fill="#a0a0a0" /><path d="M971.2 159.2 L979.9 159.2 L975.5 163.8 Z" fill="#a0a0a0" /><path d="M1459.8 159.2 L1468.4 159.2 L1464.1 163.8 Z" fill="#a0a0a0" /><path d="M1005 151 L1013.4 155.6 V165.6 L1005 170.2 L996.6 165.6 V155.6 Z" fill="#10142e" stroke="#8a52cc" stroke-width="1.6" stroke-linejoin="round"/><path d="M996.8 155.8 L1005 160.4 L1013.2 155.8 M1005 160.4 V170" fill="none" stroke="#8a52cc" stroke-width="1.5" /><path d="M1479.9 159.6 H1496.1 M1479.9 163.4 H1496.1 M1488 152 V159 M1484.6 155 L1488 151.6 L1491.4 155 M1488 164 V170.6 M1484.6 167.4 L1488 170.8 L1491.4 167.4" fill="none" stroke="#1e9af0" stroke-width="1.6" /><path d="M1460.2 126.8 L1471.8 126.8 L1466.0 132.7 Z" fill="#e8e8e8" /><path d="M1500.20 126.80 L1500.05 128.28 L1497.50 128.83 L1497.01 129.74 L1497.97 132.17 L1496.82 133.12 L1494.63 131.70 L1493.63 132.00 L1492.60 134.40 L1491.12 134.25 L1490.57 131.70 L1489.66 131.21 L1487.23 132.17 L1486.28 131.02 L1487.70 128.83 L1487.40 127.83 L1485.00 126.80 L1485.15 125.32 L1487.70 124.77 L1488.19 123.86 L1487.23 121.43 L1488.38 120.48 L1490.57 121.90 L1491.57 121.60 L1492.60 119.20 L1494.08 119.35 L1494.63 121.90 L1495.54 122.39 L1497.97 121.43 L1498.92 122.58 L1497.50 124.77 L1497.80 125.77 Z" fill="#eeeeee"/><circle cx="1492.6" cy="126.8" r="2.6" fill="#020a1e"/><path d="M1836.7 126.6 L1849.0 126.6 L1842.8 132.8 Z" fill="#f0f0f0" /><rect x="1865.2" y="121.7" width="1.6" height="9.3" fill="#f4f4f4"/><rect x="1865.2" y="121.7" width="7.8" height="1.6" fill="#f4f4f4"/><rect x="1870.1" y="121.7" width="2.9" height="9.3" fill="#f4f4f4"/><rect x="1863.9" y="130.8" width="10.2" height="1.6" fill="#f4f4f4"/><rect x="1868.2" y="132.4" width="1.8" height="5.6" fill="#f4f4f4"/><path d="M1889.0 124.2 L1902.4 135.6 M1902.4 124.2 L1889.0 135.6" fill="none" stroke="#f4f4f4" stroke-width="2.2" /><path d="M1836.7 736.8 L1849.0 736.8 L1842.8 743.0 Z" fill="#f0f0f0" /><rect x="1865.2" y="731.9" width="1.6" height="9.3" fill="#f4f4f4"/><rect x="1865.2" y="731.9" width="7.8" height="1.6" fill="#f4f4f4"/><rect x="1870.1" y="731.9" width="2.9" height="9.3" fill="#f4f4f4"/><rect x="1863.9" y="741.0" width="10.2" height="1.6" fill="#f4f4f4"/><rect x="1868.2" y="742.6" width="1.8" height="5.6" fill="#f4f4f4"/><path d="M1889.0 734.4 L1902.4 745.8 M1902.4 734.4 L1889.0 745.8" fill="none" stroke="#f4f4f4" stroke-width="2.2" /><path d="M1425.0 972.5 L1437.3 972.5 L1431.2 978.7 Z" fill="#f0f0f0" /><rect x="1453.5" y="967.6" width="1.6" height="9.3" fill="#f4f4f4"/><rect x="1453.5" y="967.6" width="7.8" height="1.6" fill="#f4f4f4"/><rect x="1458.4" y="967.6" width="2.9" height="9.3" fill="#f4f4f4"/><rect x="1452.2" y="976.7" width="10.2" height="1.6" fill="#f4f4f4"/><rect x="1456.5" y="978.3" width="1.8" height="5.6" fill="#f4f4f4"/><path d="M1477.3 970.1 L1490.7 981.5 M1490.7 970.1 L1477.3 981.5" fill="none" stroke="#f4f4f4" stroke-width="2.2" /><circle cx="1536.2" cy="168.3" r="9.2" fill="none" stroke="#2a3142" stroke-width="1.4"/><path d="M1542 168.3 H1531 M1535.5 163.5 L1530.8 168.3 L1535.5 173.1" fill="none" stroke="#2a3142" stroke-width="1.4" /><circle cx="1570.2" cy="168.3" r="9.2" fill="none" stroke="#2a3142" stroke-width="1.4"/><path d="M1564.5 168.3 H1575.5 M1571 163.5 L1575.7 168.3 L1571 173.1" fill="none" stroke="#2a3142" stroke-width="1.4" /><path d="M1595 170.4 L1605 160.6 L1615 170.4 M1597.6 168.6 V178.6 H1602.6 V172.4 H1607.4 V178.6 H1612.4 V168.6" fill="#1a2136" stroke="#d0d0d0" stroke-width="1.6" stroke-linejoin="round"/><rect x="1637.0" y="159.4" width="12.4" height="14.6" fill="#2a3042" stroke="#c8c8c8" stroke-width="1.4" rx="1"/><path d="M1640 163 H1641.6 M1643.4 163 H1647 M1640 166.4 H1641.6 M1643.4 166.4 H1647 M1640 169.8 H1641.6 M1643.4 169.8 H1647" fill="none" stroke="#e0e0e0" stroke-width="1.5" /><path d="M1637.6 168 L1640.4 169.6 V179.4 L1637.6 181 L1631.4 175.6 L1629 177.6 L1627 176.6 V172.4 L1629 171.4 L1631.4 173.4 Z M1637 172 L1633.6 174.5 L1637 177 Z M1628.6 173.4 L1630 174.5 L1628.6 175.6 Z" fill="#9a5ae0" fill-rule="evenodd"/><rect x="1660.3" y="153.0" width="1.5" height="31.8" fill="#2a2622"/><rect x="1661.8" y="153.0" width="2.2" height="31.8" fill="#27466f"/><path d="M1675.6 156.9 H1684.2 L1680.8 160.6 V164.4 H1679 V160.6 Z" fill="#2f9bf5" /><circle cx="1688.9" cy="171.0" r="7.6" fill="#1a2136" stroke="#eeeeee" stroke-width="1.5"/><path d="M1688.9 166.2 V171.4 H1692.8" fill="none" stroke="#eeeeee" stroke-width="1.4" /><path d="M1709.9 167.0 L1718.9 167.0 L1714.4 171.9 Z" fill="#6f6f6f" /><path d="M1751 166.4 H1731.6 L1736.6 161.8 M1731.2 172.2 H1750.6 L1745.6 176.8" fill="none" stroke="#d0d0d0" stroke-width="1.5" /><path d="M1768.6 160 V157.8 H1786.4 V175.4 H1784.2" fill="none" stroke="#c0c0c0" stroke-width="1.4" /><rect x="1765.0" y="161.2" width="18.0" height="17.8" fill="#1a2136" stroke="#e8e8e8" stroke-width="1.6" rx="1"/><path d="M1769.4 170 H1779" fill="none" stroke="#e8e8e8" stroke-width="1.5" /><rect x="1808.0" y="159.4" width="10.8" height="13.0" fill="#1a2136" stroke="#b8b8b8" stroke-width="1.4" rx="1"/><rect x="1799.0" y="162.6" width="10.0" height="12.8" fill="#1a2136" stroke="#b8b8b8" stroke-width="1.4" rx="1"/><rect x="1803.6" y="166.2" width="10.2" height="12.8" fill="#1a2136" stroke="#e8e8e8" stroke-width="1.5" rx="1"/><rect x="1830.2" y="153.0" width="1.5" height="32.0" fill="#2a2622"/><rect x="1831.7" y="153.0" width="2.2" height="32.0" fill="#27466f"/><path d="M1846.5 176.8 L1855.7 167.6 C1854.9 165.0 1855.7 162.2 1857.9 160.4 C1859.9 158.8 1862.5 158.4 1864.5 159.2 L1861.1 162.6 L1862.7 164.2 L1866.1 160.8 C1866.9 163.0 1866.3 165.6 1864.5 167.4 C1862.7 169.2 1860.1 169.8 1857.7 169.2 L1848.5 178.6 C1847.7 179.4 1846.3 179.2 1846.5 176.8 Z" fill="#1a2136" stroke="#d0d0d0" stroke-width="1.5" stroke-linejoin="round"/><path d="M1855.7 167.6 C1854.9 165.0 1855.7 162.2 1857.9 160.4 C1859.9 158.8 1862.5 158.4 1864.5 159.2 L1861.1 162.6 L1862.7 164.2 L1866.1 160.8 C1866.9 163.0 1866.3 165.6 1864.5 167.4 C1862.7 169.2 1860.1 169.8 1857.7 169.2 Z" fill="#d4d4d4" /><path d="M1900 153.6 L1903 156.4 L1900 159.2 Z M1905.6 153.6 L1908.6 156.4 L1905.6 159.2 Z" fill="#9a9aa4" /><circle cx="1882.6" cy="204.8" r="5.6" fill="none" stroke="#2196f3" stroke-width="2.5"/><path d="M1878.4 208.8 L1871.8 214.8" fill="none" stroke="#2196f3" stroke-width="3.4" /><path d="M1898.0 205.1 L1906.9 205.1 L1902.5 209.8 Z" fill="#2196f3" /><path d="M1545 249.8 H1537.5 V232.6 H1556.7 V240" fill="none" stroke="#c8c8c8" stroke-width="1.5" /><path d="M1537.5 236.4 H1556.7" fill="none" stroke="#c8c8c8" stroke-width="1.5" /><rect x="1538.3" y="237.2" width="11.7" height="11.8" fill="#151d33"/><path d="M1555.4 239.4 L1558 240.8 V250.4 L1555.4 251.8 L1549.4 246.6 L1547 248.6 L1545 247.6 V243.6 L1547 242.6 L1549.4 244.6 Z M1554.8 243.2 L1551.4 245.6 L1554.8 248 Z M1546.6 244.6 L1547.8 245.6 L1546.6 246.6 Z" fill="#9a5ae0" fill-rule="evenodd"/><path d="M1539.9 264.9 V274.8 H1530 Z" fill="#ffffff" /><rect x="1564.3" y="261.8" width="19.5" height="16.3" fill="#b0106e" stroke="#ecc4dc" stroke-width="1.4"/><path d="M1570.6 264.8 V271.2 M1567.4 268 H1573.8 M1577.2 269.2 V275.6 M1574 272.4 H1580.4" fill="none" stroke="#ffffff" stroke-width="1.5" /><path d="M1557.9 290.5 L1564.2 297.3 L1557.9 304.1 Z" fill="none" stroke="#f0f0f0" stroke-width="1.4" stroke-linejoin="round"/><path d="M1557.9 318.5 L1564.2 325.3 L1557.9 332.1 Z" fill="none" stroke="#f0f0f0" stroke-width="1.4" stroke-linejoin="round"/><path d="M1557.9 346.6 L1564.2 353.4 L1557.9 360.2 Z" fill="none" stroke="#f0f0f0" stroke-width="1.4" stroke-linejoin="round"/><path d="M1557.9 374.6 L1564.2 381.4 L1557.9 388.2 Z" fill="none" stroke="#f0f0f0" stroke-width="1.4" stroke-linejoin="round"/><rect x="1589.7" y="294.9" width="5.2" height="5.2" fill="#1a2236" stroke="#e0e0e0" stroke-width="1.3"/><path d="M1595.4 297.5 H1603" fill="none" stroke="#e0e0e0" stroke-width="1.4" /><rect x="1603.5" y="292.9" width="8.7" height="8.8" fill="#1a2236" stroke="#e0e0e0" stroke-width="1.4"/><path d="M1598 332.6 H1610.8 V319.6 H1600.4 L1598.6 317.9 H1591.2 V324" fill="#857658" stroke="#f0d492" stroke-width="1.5" stroke-linejoin="round"/><rect x="1591.0" y="324.8" width="10.6" height="11.0" fill="#151d33" stroke="#e8e8e8" stroke-width="1.4"/><path d="M1593.8 333 L1598.8 328 M1595.2 327.6 H1599 V331.4" fill="none" stroke="#e8e8e8" stroke-width="1.3" /><path d="M1600 361.5 H1591.2 V346.1 H1600.6 L1602.4 347.9 H1610.6 V354.3" fill="#857658" stroke="#f0d492" stroke-width="1.5" stroke-linejoin="round"/><path d="M1591.2 348.9 H1600.8" fill="none" stroke="#f0d492" stroke-width="1.2" /><path d="M1599.8 355.3 H1613 L1608 360.7 V365.5 H1604.8 V360.7 Z" fill="#0c2a58" stroke="#3a9af5" stroke-width="1.5" stroke-linejoin="round"/><path d="M1600 389.5 H1591.2 V374.1 H1600.6 L1602.4 375.9 H1610.6 V382.3" fill="#857658" stroke="#f0d492" stroke-width="1.5" stroke-linejoin="round"/><path d="M1591.2 376.9 H1600.8" fill="none" stroke="#f0d492" stroke-width="1.2" /><path d="M1599.8 383.3 H1613 L1608 388.7 V393.5 H1604.8 V388.7 Z" fill="#0c2a58" stroke="#3a9af5" stroke-width="1.5" stroke-linejoin="round"/><path d="M1600 417.5 H1591.2 V402.1 H1600.6 L1602.4 403.9 H1610.6 V410.3" fill="#857658" stroke="#f0d492" stroke-width="1.5" stroke-linejoin="round"/><path d="M1591.2 404.9 H1600.8" fill="none" stroke="#f0d492" stroke-width="1.2" /><path d="M1599.8 411.3 H1613 L1608 416.7 V421.5 H1604.8 V416.7 Z" fill="#0c2a58" stroke="#3a9af5" stroke-width="1.5" stroke-linejoin="round"/><path d="M1600 445.5 H1591.2 V430.1 H1600.6 L1602.4 431.9 H1610.6 V438.3" fill="#857658" stroke="#f0d492" stroke-width="1.5" stroke-linejoin="round"/><path d="M1591.2 432.9 H1600.8" fill="none" stroke="#f0d492" stroke-width="1.2" /><path d="M1599.8 439.3 H1613 L1608 444.7 V449.5 H1604.8 V444.7 Z" fill="#0c2a58" stroke="#3a9af5" stroke-width="1.5" stroke-linejoin="round"/><path d="M1600 473.5 H1591.2 V458.1 H1600.6 L1602.4 459.9 H1610.6 V466.3" fill="#857658" stroke="#f0d492" stroke-width="1.5" stroke-linejoin="round"/><path d="M1591.2 460.9 H1600.8" fill="none" stroke="#f0d492" stroke-width="1.2" /><path d="M1599.8 467.3 H1613 L1608 472.7 V477.5 H1604.8 V472.7 Z" fill="#0c2a58" stroke="#3a9af5" stroke-width="1.5" stroke-linejoin="round"/><path d="M1894.7 770.0 L1903.0 770.0 L1898.8 774.6 Z" fill="#f0f0f0" /><rect x="1523.2" y="796.4" width="7.4" height="7.6" fill="#c4c4c4"/><path d="M1526.9 798.0 V802.4 M1524.7 800.2 H1529.1" fill="none" stroke="#0a0a3a" stroke-width="1.5" /><rect x="1523.2" y="809.6" width="7.4" height="7.6" fill="#c4c4c4"/><path d="M1526.9 811.2 V815.6 M1524.7 813.4 H1529.1" fill="none" stroke="#0a0a3a" stroke-width="1.5" /><path d="M1533 797 H1542.4 M1533 799.8 H1545.2 M1533 802.6 H1545.2 M1533 805.4 H1545.2 M1533 808.2 H1545.2 M1533 811.4 H1542.4 M1533 814.2 H1542.4 M1533 817.2 H1541 M1543 817.2 H1545.2" fill="none" stroke="#c4c4c4" stroke-width="1.5" /><rect x="1557.2" y="796.0" width="9.4" height="9.4" fill="#b0b0b0"/><rect x="1557.2" y="808.4" width="9.4" height="9.4" fill="#b0b0b0"/><path d="M1559.6 803.6 L1561.9 797.6 L1564.2 803.6 M1560.4 801.6 H1563.4 M1559.6 810.2 H1564.2 L1559.6 816 H1564.2" fill="none" stroke="#202020" stroke-width="1.3" /><path d="M1569.2 795.6 V801 H1575.8 V806" fill="none" stroke="#d0d0d0" stroke-width="1.2" /><path d="M1573.4 802.6 V812 M1569.8 809.4 L1573.4 815.8 L1577 809.4 Z" fill="#2a9ad8" stroke="#d0d0d0" stroke-width="1.2" /><rect x="1572.2" y="802.6" width="2.4" height="8.4" fill="#103a58"/><path d="M1597.5 815.8 L1607.8 805.5 C1607.0 802.6 1607.8 799.4 1610.3 797.4 C1612.6 795.6 1615.5 795.2 1617.7 796.1 L1613.9 799.9 L1615.7 801.7 L1619.5 797.9 C1620.4 800.3 1619.7 803.2 1617.7 805.3 C1615.7 807.3 1612.8 807.9 1610.1 807.3 L1599.8 817.8 C1598.9 818.7 1597.3 818.5 1597.5 815.8 Z" fill="#b4b4b4" stroke="#f4f4f4" stroke-width="1.3" stroke-linejoin="round"/><circle cx="1614.4" cy="800.2" r="2.0" fill="#10143a"/><path d="M90.2 932.9 L99.0 932.9 L94.6 937.4 Z" fill="#f0f0f0" /><path d="M113.5 943.6 V940.2 C110.4 938.6 109.6 934.6 111.4 931 C113.2 927.4 118.2 925.4 122 927.8 C125.8 930.2 126 935.4 122.6 938.4 V943.6" fill="none" stroke="#8a52cc" stroke-width="1.8" /><path d="M117.8 943.2 V936 M117.8 936.4 L120.8 933.2 M115 929.6 L116 931.4 M118.6 928.6 V930.6 M122 930 L121 931.6" fill="none" stroke="#8a52cc" stroke-width="1.4" /><path d="M108 935.2 C106.6 936.6 106.8 938.8 108.4 939.8 L112.8 944 L114.6 942.2 L110.6 937.8 C111.2 936.6 110.6 935.6 110 935 L108.6 936.8 Z" fill="#8a52cc" /><circle cx="175.0" cy="933.7" r="8.0" fill="#7ddc7a"/><path d="M171 933.8 L174 936.8 L179.2 931" fill="none" stroke="#10301a" stroke-width="1.8" /><path d="M601.3 1011.9 L610.3 1011.9 L605.8 1016.6 Z" fill="#a0a0a0" /><path d="M641 1017 H661.6 M641 1022.6 H661.6 M646.6 1016 V1007.4 C646.6 1002.6 652.6 1002.6 652.6 1007.4 V1008 M643.4 1012.8 L646.6 1016.2 L649.8 1012.8" fill="none" stroke="#3a4152" stroke-width="1.3" /><rect x="641.0" y="1018.4" width="14.0" height="2.8" fill="#3a4152"/><path d="M696 1007.8 H687 M690.2 1004.6 L686.8 1007.8 L690.2 1011 M690.4 1015 H706.8 M690.4 1022.8 H706.8" fill="none" stroke="#3a4152" stroke-width="1.3" /><rect x="690.4" y="1016.6" width="16.4" height="4.6" fill="#3a4152"/><path d="M720.4 1007.8 H729.4 M726.2 1004.6 L729.6 1007.8 L726.2 1011 M723.4 1015 H739.8 M723.4 1022.8 H739.8" fill="none" stroke="#3a4152" stroke-width="1.3" /><rect x="723.4" y="1016.6" width="16.4" height="4.6" fill="#3a4152"/><path d="M769 1003.4 L776.4 1010.8 M776.4 1003.4 L769 1010.8 M780 1003.6 H789.6 M780 1007.4 H789.6 M780 1011.2 H789.6 M768.8 1016.4 H789.6 M768.8 1021.4 H789.6" fill="none" stroke="#3a4152" stroke-width="1.3" /><path d="M829.4 1009.4 H836.4 V1018.6 H824.6 M828 1015.2 L824.2 1018.6 L828 1022" fill="none" stroke="#3a9af5" stroke-width="1.6" /><circle cx="873.3" cy="1013.3" r="9.6" fill="#1a2136" stroke="#eeeeee" stroke-width="1.6"/><path d="M873.3 1007.4 V1013.8 H878" fill="none" stroke="#eeeeee" stroke-width="1.5" /><path d="M9.2 1174 H31.2 V1191.6 H24.4 L20.2 1195.6 L16 1191.6 H9.2 Z" fill="#20243a" stroke="#f0f0f0" stroke-width="1.6" stroke-linejoin="round"/><path d="M1471.2 1193.8 V1175.2 M1464 1182.4 L1471.2 1175 L1478.4 1182.4" fill="none" stroke="#f0f0f0" stroke-width="1.6" /><path d="M1646 1188 L1651.9 1182.2 L1657.8 1188 Z" fill="#f5037f" /><path d="M1809 1188 L1812.4 1184.4 L1815.8 1188 Z" fill="#f5037f" /><rect x="1693.4" y="1177.0" width="19.2" height="4.4" fill="#20243a" stroke="#e8e8e8" stroke-width="1.5"/><path d="M1695 1181.6 V1194.4 H1711 V1181.6 M1700 1181.8 V1189.6 L1703 1187 L1706 1189.6 V1181.8" fill="none" stroke="#e8e8e8" stroke-width="1.5" /><path d="M1853.2 1190.6 C1855.4 1188.6 1854.6 1184 1855.8 1180.4 C1857 1177 1862 1177 1863.2 1180.4 C1864.4 1184 1863.6 1188.6 1865.8 1190.6 Z" fill="#20243a" stroke="#e8e8e8" stroke-width="1.5" stroke-linejoin="round" opacity="0.9"/><circle cx="1859.5" cy="1193.0" r="1.7" fill="none" stroke="#e8e8e8" stroke-width="1.3"/><rect x="1915.0" y="1185.2" width="2.0" height="2.0" fill="#a0a0ac"/><rect x="1912.0" y="1188.2" width="2.0" height="2.0" fill="#a0a0ac"/><rect x="1915.0" y="1188.2" width="2.0" height="2.0" fill="#a0a0ac"/><rect x="1909.0" y="1191.2" width="2.0" height="2.0" fill="#a0a0ac"/><rect x="1912.0" y="1191.2" width="2.0" height="2.0" fill="#a0a0ac"/><rect x="1915.0" y="1191.2" width="2.0" height="2.0" fill="#a0a0ac"/><rect x="1906.0" y="1194.2" width="2.0" height="2.0" fill="#a0a0ac"/><rect x="1909.0" y="1194.2" width="2.0" height="2.0" fill="#a0a0ac"/><rect x="1912.0" y="1194.2" width="2.0" height="2.0" fill="#a0a0ac"/><rect x="1915.0" y="1194.2" width="2.0" height="2.0" fill="#a0a0ac"/></svg><div id="frame"></div></div></body></html>
